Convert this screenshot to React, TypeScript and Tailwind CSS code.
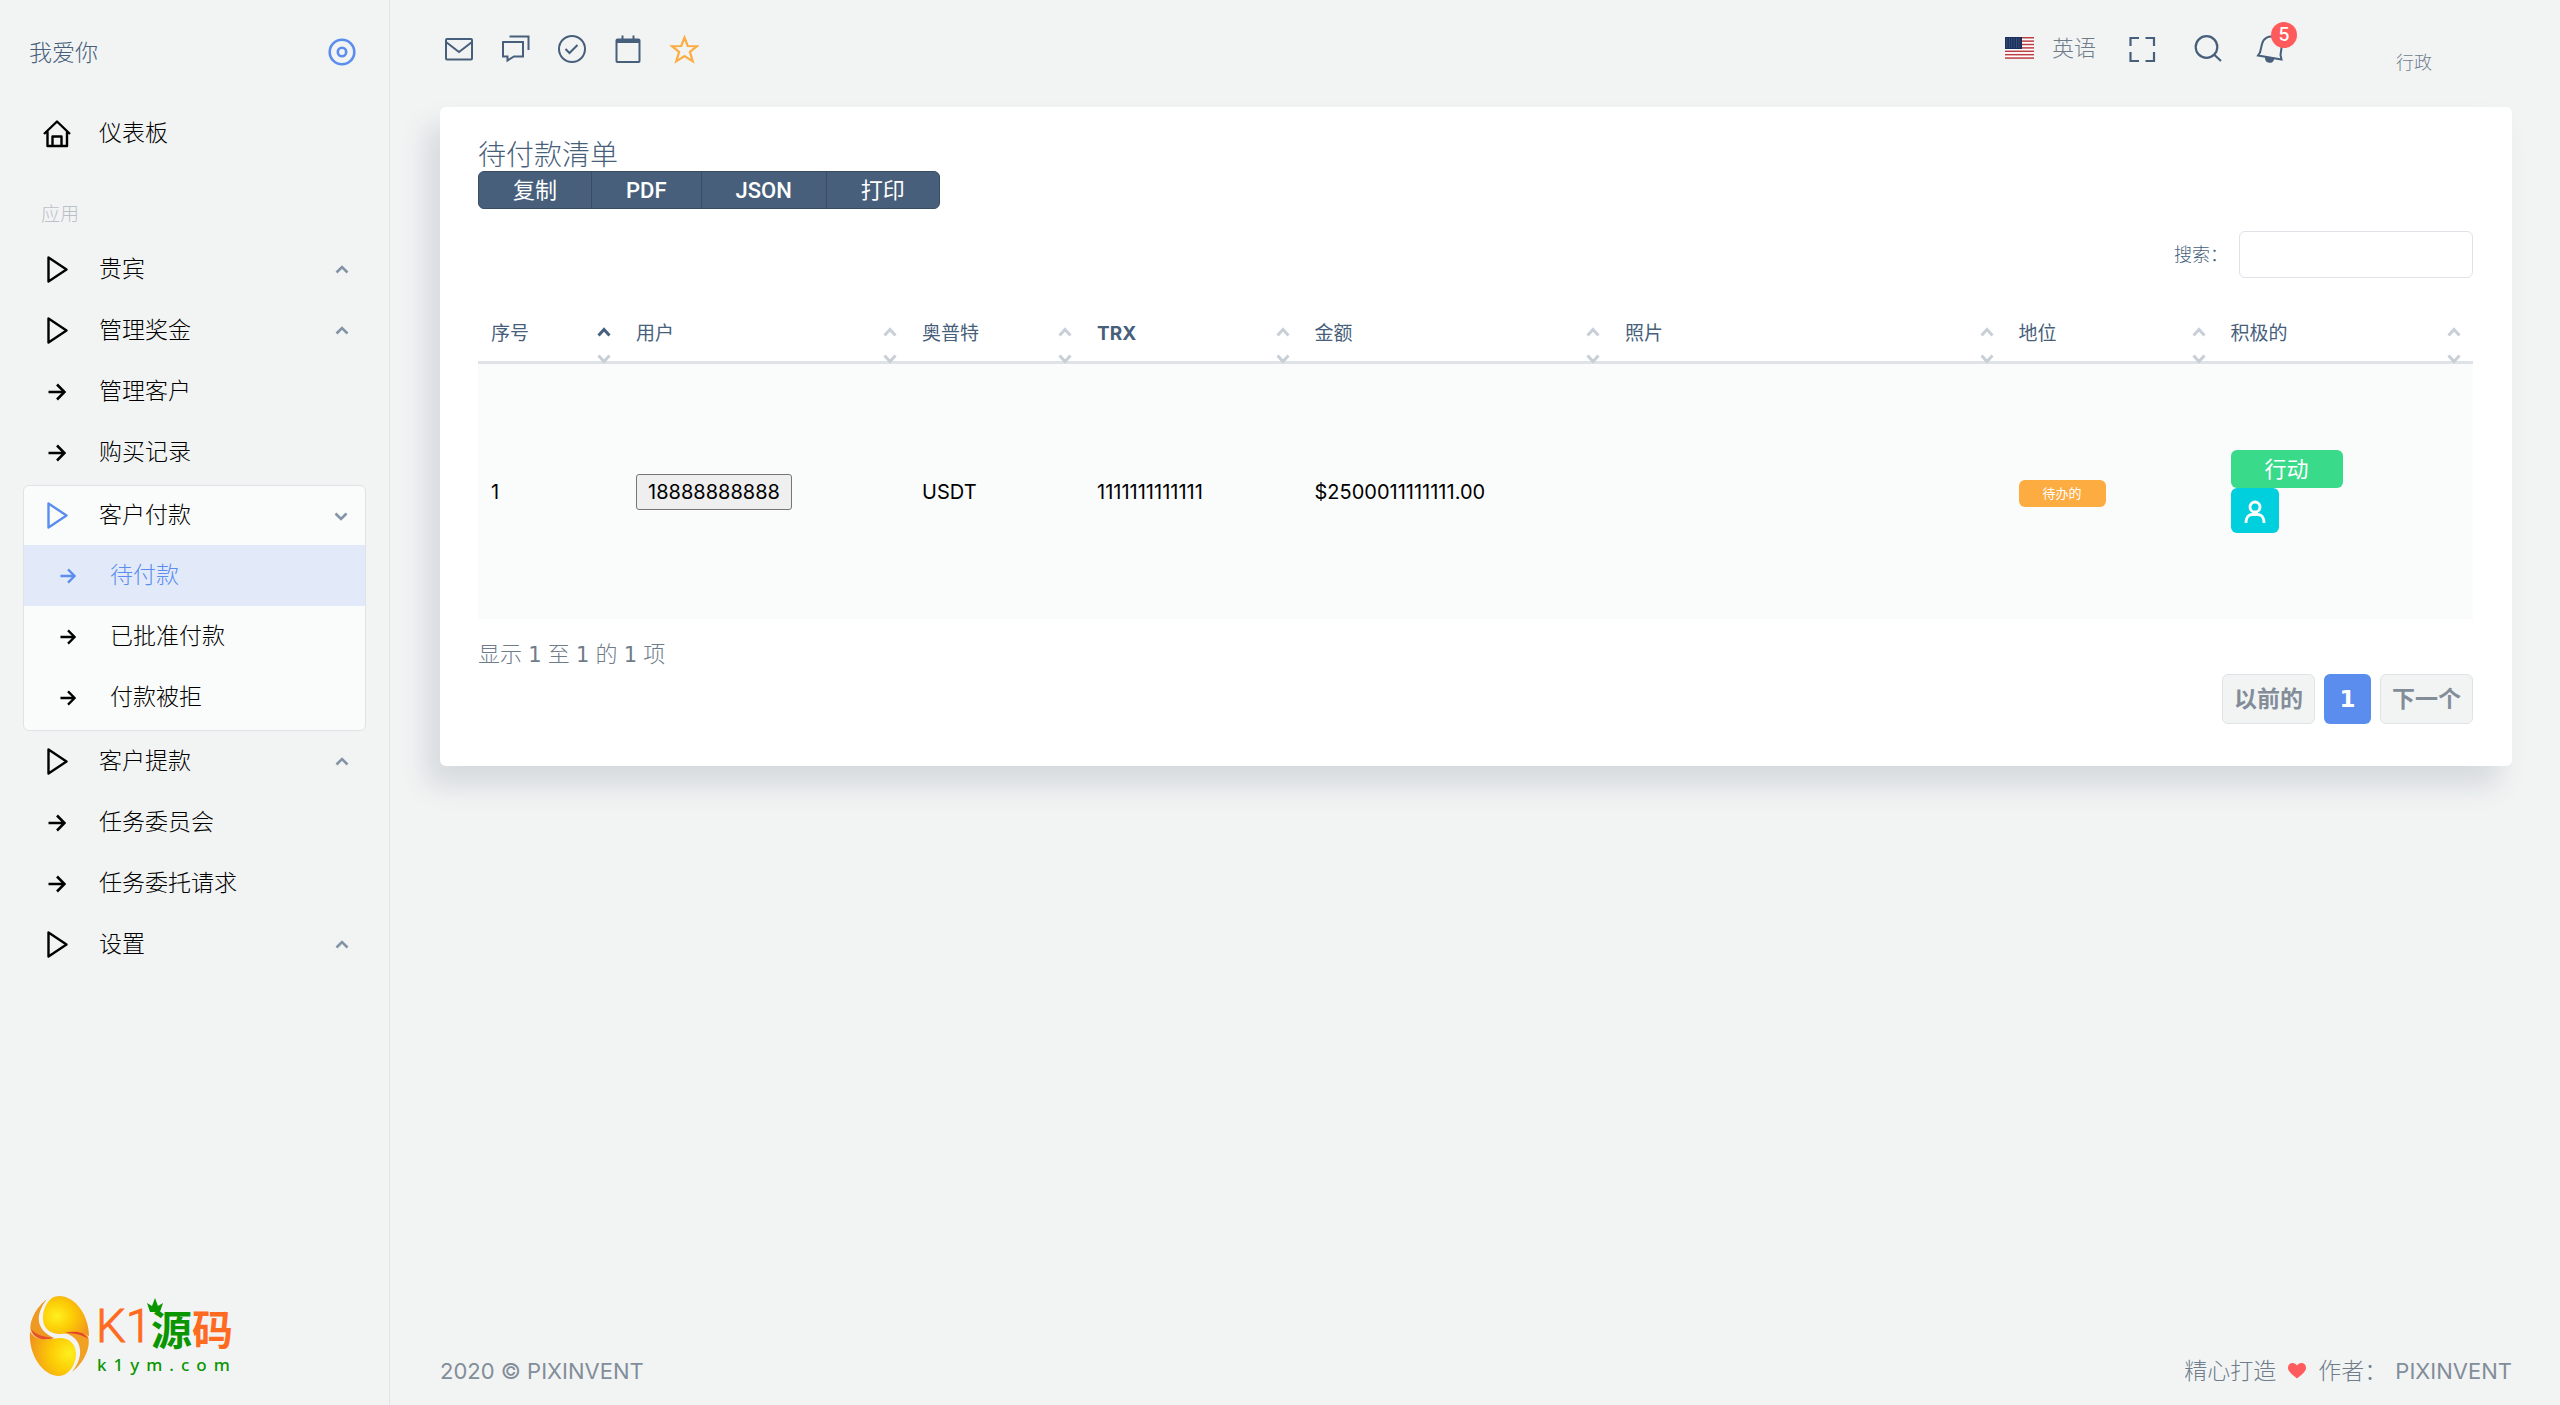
import { clsx } from 'clsx';

const MENU_TOP = [
  { label: '贵宾', icon: 'play', arrow: true },
  { label: '管理奖金', icon: 'play', arrow: true },
  { label: '管理客户', icon: 'arrow', arrow: false },
  { label: '购买记录', icon: 'arrow', arrow: false },
];

const SUB_MENU = [
  { label: '待付款', active: true },
  { label: '已批准付款', active: false },
  { label: '付款被拒', active: false },
];

const MENU_BOTTOM = [
  { label: '客户提款', icon: 'play', arrow: true },
  { label: '任务委员会', icon: 'arrow', arrow: false },
  { label: '任务委托请求', icon: 'arrow', arrow: false },
  { label: '设置', icon: 'play', arrow: true },
];

const COLUMNS = [
  { label: '序号', width: 'w-[7.27%]' },
  { label: '用户', width: 'w-[14.34%]' },
  { label: '奥普特', width: 'w-[8.77%]' },
  { label: 'TRX', width: 'w-[10.9%]' },
  { label: '金额', width: 'w-[15.56%]' },
  { label: '照片', width: 'w-[19.73%]' },
  { label: '地位', width: 'w-[10.63%]' },
  { label: '积极的', width: 'w-[12.8%]' },
];

function PlayIcon() {
  return (
    <svg width="28" height="28" viewBox="0 0 28 28" fill="none" stroke="currentColor" strokeWidth="2.4" strokeLinejoin="round">
      <path d="M5.5 1.5 L23.5 13.5 L5.5 25.5 Z" />
    </svg>
  );
}

function ArrowIcon({ size }: { size: number }) {
  return (
    <svg width={size} height={size} viewBox="0 0 18 18" fill="none" stroke="currentColor" strokeWidth="2.6">
      <path d="M0.5 9 H16 M9 1.5 L16.5 9 L9 16.5" />
    </svg>
  );
}

function Chevron({ down }: { down?: boolean }) {
  return (
    <svg width="14" height="10" viewBox="0 0 14 10" fill="none" stroke="#8494a7" strokeWidth="2.6">
      <path d={down ? 'M1.5 2.5 L7 8 L12.5 2.5' : 'M1.5 7.5 L7 2 L12.5 7.5'} />
    </svg>
  );
}

function MenuItem({ label, icon, arrow }: { label: string; icon: string; arrow: boolean }) {
  return (
    <a href="#" className="h-[61px] pl-[18px] pr-[17px] flex items-center text-black">
      <span className="w-[32px] flex justify-center">
        {icon === 'play' ? <PlayIcon /> : <ArrowIcon size={18} />}
      </span>
      <span className="flex-1 pl-[26px]">{label}</span>
      {arrow && <Chevron />}
    </a>
  );
}

function Logo() {
  return (
    <svg width="216" height="84" viewBox="0 0 216 84" className="overflow-visible">
      <defs>
        <radialGradient id="top" cx="0.3" cy="0.5" r="0.8">
          <stop offset="0" stopColor="#fff01e" />
          <stop offset="0.45" stopColor="#fccb05" />
          <stop offset="1" stopColor="#f0921e" />
        </radialGradient>
        <radialGradient id="bottom" cx="0.85" cy="0.5" r="0.9">
          <stop offset="0" stopColor="#fff01e" />
          <stop offset="0.45" stopColor="#fccb05" />
          <stop offset="1" stopColor="#f0921e" />
        </radialGradient>
      </defs>
      <path d="M30 1 C46 1 60 20 60 41 C52 36 42 39 29 39 C18 38 13 30 14 21 C15 12 20 1 30 1 Z" fill="url(#top)" />
      <path d="M1 36 C6 47 20 44 32 43 C42 43 48 52 47 61 C46 71 39 81 30 81 C14 81 -1 60 1 36 Z" fill="url(#bottom)" />
      <path d="M18 4 C3 16 0 31 2 36 C5 44 14 45 25 43 C9 36 4 22 18 4 Z" fill="#ee9a22" />
      <path d="M2 34 C5 44 14 46 25 43 C15 42 7 40 2 34 Z" fill="#e6502c" />
      <path d="M43 77 C57 66 62 50 59 41 C56 37 46 36 36 38 C52 42 57 60 43 77 Z" fill="#f0a022" />
      <path d="M59 44 C56 37 46 35 36 38 C46 38 54 40 59 44 Z" fill="#e6402c" />
      <text x="67" y="47" fontSize="47" fontFamily="Roboto, sans-serif" fontWeight="300" stroke="#ff6a21" strokeWidth="1" fill="#ff6a21">K1</text>
      <path d="M121 17 L118 8 L123 11 L126 3 L129 11 L134 8 L131 17 Z" fill="#0a9600" />
      <text x="122" y="50" fontSize="41" fontWeight="700" fontFamily="'Noto Sans CJK SC', sans-serif" fill="#0a9600">源</text>
      <text x="163" y="50" fontSize="41" fontWeight="700" fontFamily="'Noto Sans CJK SC', sans-serif" fill="#ff6a21">码</text>
      <text x="68" y="76" fontSize="17" letterSpacing="7" fontFamily="'Noto Sans', sans-serif" fontWeight="500" fill="#0a9600">k1ym.com</text>
    </svg>
  );
}

function Flag() {
  return (
    <svg width="29" height="22" viewBox="0 0 29 22" className="shrink-0">
      <rect width="29" height="22" fill="#fff" />
      {[0, 2, 4, 6, 8, 10, 12].map(i => (
        <rect key={i} y={(i * 22) / 13} width="29" height="1.5" fill="#bd3d44" />
      ))}
      <rect width="17" height="12" fill="#192f5d" />
      {[1.5, 3.5, 5.5, 7.5, 9.5].map(y => (
        <path key={y} d={`M1.5 ${y + 0.5} H16`} stroke="#8c97ae" strokeWidth="0.8" strokeDasharray="0.8 1.6" />
      ))}
    </svg>
  );
}

function Sidebar() {
  return (
    <aside className="w-[390px] shrink-0 border-r border-[#dfe3e7] flex flex-col text-[23px] font-light">
      <div className="h-[103px] pt-[36px] pl-[29px] pr-[33px] flex items-start justify-between">
        <span className="text-[#475f7b] leading-[35px]">我爱你</span>
        <button aria-label="切换菜单" className="text-[#5a8dee] pt-[2px]">
          <svg width="28" height="28" viewBox="0 0 28 28" fill="none" stroke="currentColor" strokeWidth="2.6">
            <circle cx="14" cy="14" r="12.3" />
            <circle cx="14" cy="14" r="4.2" />
          </svg>
        </button>
      </div>
      <nav className="px-[23px]">
        <a href="#" className="h-[61px] pl-[18px] flex items-center text-black">
          <span className="w-[32px] flex justify-center">
            <svg width="28" height="28" viewBox="0 0 28 28" fill="none" stroke="currentColor" strokeWidth="2.4" strokeLinejoin="round">
              <path d="M1 14 L14 1.5 L27 14 M4.5 11.5 V26 H24 V11.5 M9.5 26 V16.5 H18.5 V26" />
            </svg>
          </span>
          <span className="pl-[26px]">仪表板</span>
        </a>
        <div className="h-[75px] pl-[18px] pt-[38px] text-[19px] leading-[26px] text-[#bac0c7]">应用</div>
        {MENU_TOP.map(item => <MenuItem key={item.label} {...item} />)}
        <div className="mt-[2px] pb-[2px] border border-[#dfe3e7] rounded-md bg-[#fafbfb] overflow-hidden">
          <a href="#" className="h-[59px] pl-[17px] pr-[17px] flex items-center text-black">
            <span className="w-[32px] flex justify-center text-[#5a8dee]"><PlayIcon /></span>
            <span className="flex-1 pl-[26px]">客户付款</span>
            <Chevron down />
          </a>
          {SUB_MENU.map(item => (
            <a
              key={item.label}
              href="#"
              className={clsx(
                'h-[61px] pl-[36px] flex items-center',
                item.active ? 'bg-[#e2eafa] text-[#5a8dee]' : 'text-black',
              )}
            >
              <ArrowIcon size={16} />
              <span className="pl-[34px]">{item.label}</span>
            </a>
          ))}
        </div>
        {MENU_BOTTOM.map(item => <MenuItem key={item.label} {...item} />)}
      </nav>
      <div className="mt-auto pl-[29px] pb-[26px]"><Logo /></div>
    </aside>
  );
}

function Header() {
  return (
    <header className="h-[107px] pl-[5px] flex items-start text-[#475f7b]">
      <div className="pt-[34px] flex gap-[26px]">
        <button aria-label="邮件">
          <svg width="30" height="30" viewBox="0 0 30 30" fill="none" stroke="currentColor" strokeWidth="2">
            <rect x="1" y="5" width="26" height="20.5" rx="1" />
            <path d="M1 8 L14 18 L27 8" />
          </svg>
        </button>
        <button aria-label="聊天">
          <svg width="30" height="30" viewBox="0 0 30 30" fill="none" stroke="currentColor" strokeWidth="2">
            <path d="M8.5 2.5 H27.5 V16" />
            <path d="M2 8 H22 V22.5 H13 L6.5 26.5 V22.5 H2 Z" />
          </svg>
        </button>
        <button aria-label="待办">
          <svg width="30" height="30" viewBox="0 0 30 30" fill="none" stroke="currentColor" strokeWidth="2">
            <circle cx="15" cy="15" r="13" />
            <path d="M8.5 15 L12.5 19 L20.5 11" />
          </svg>
        </button>
        <button aria-label="日历">
          <svg width="30" height="30" viewBox="0 0 30 30" fill="none" stroke="currentColor" strokeWidth="2">
            <rect x="3.5" y="5.5" width="23" height="22.5" rx="1" />
            <path d="M3.5 7 H26.5" strokeWidth="4" />
            <path d="M9.5 1.5 V5 M20.5 1.5 V5" />
          </svg>
        </button>
        <button aria-label="收藏" className="text-[#fdac41]">
          <svg width="30" height="30" viewBox="0 0 30 30" fill="none" stroke="currentColor" strokeWidth="2.2">
            <path d="M15.5 3.5 L18.7 12 L28 12.2 L20.9 17.8 L23.7 27.3 L15.5 22 L7.3 27.3 L10.1 17.8 L3 12.2 L12.3 12 Z" />
          </svg>
        </button>
      </div>
      <div className="ml-auto flex items-start">
        <a href="#" className="pt-[32px] flex items-center gap-[18px] text-[22px] leading-[32px] font-light text-[#6f7c8a]">
          <Flag />英语
        </a>
        <button aria-label="全屏" className="pt-[34px] ml-[31px]">
          <svg width="30" height="30" viewBox="0 0 30 30" fill="none" stroke="currentColor" strokeWidth="2.2">
            <path d="M3.5 12 V4 H12 M18.5 4 H27 V12 M27 18 V27 H18.5 M12 27 H3.5 V18" />
          </svg>
        </button>
        <button aria-label="搜索" className="pt-[34px] ml-[36px]">
          <svg width="30" height="30" viewBox="0 0 30 30" fill="none" stroke="currentColor" strokeWidth="2.2">
            <circle cx="13.5" cy="13" r="10.8" />
            <path d="M21 20.5 L28 27" />
          </svg>
        </button>
        <button aria-label="通知" className="relative pt-[34px] ml-[33px]">
          <svg width="30" height="30" viewBox="0 0 30 30" fill="none" stroke="currentColor" strokeWidth="2">
            <path d="M2 21.5 L4 18.5 L6 10 C7.5 4 13 1.5 18 3 C24 5 26 9 25.5 14 L24.5 21 L25.5 25.5 Z" />
            <path d="M10 24.5 C10.5 28.5 15.5 29 17 25.5 Z" fill="currentColor" />
          </svg>
          <span className="absolute top-[22px] left-[15px] w-[26px] h-[26px] rounded-full bg-[#ff5b5c] text-white text-[18px] leading-[26px] font-medium">5</span>
        </button>
        <a href="#" className="ml-[110px] mr-[80px] pt-[50px] text-[18px] leading-[26px] font-light text-[#6f7c8a]">行政</a>
      </div>
    </header>
  );
}

function SortArrows({ active }: { active: boolean }) {
  return (
    <span className="absolute right-[12px] top-[22px] flex flex-col gap-[17px]">
      <svg width="14" height="10" viewBox="0 0 14 10" fill="none" strokeWidth="3" stroke={active ? '#475f7b' : '#c8cfd7'}>
        <path d="M1.5 8.5 L7 2.5 L12.5 8.5" />
      </svg>
      <svg width="14" height="10" viewBox="0 0 14 10" fill="none" strokeWidth="3" stroke="#c8cfd7">
        <path d="M1.5 1.5 L7 7.5 L12.5 1.5" />
      </svg>
    </span>
  );
}

function PaymentsTable() {
  return (
    <table className="mt-[27px] w-full table-fixed border-separate border-spacing-0 text-left">
      <thead>
        <tr>
          {COLUMNS.map((col, i) => (
            <th
              key={col.label}
              className={clsx('relative h-[59px] px-[13px] pt-[2px] border-b-3 border-[#dfe3e7] text-[19px] text-[#475f7b]', col.width, col.label === 'TRX' ? 'font-bold' : 'font-normal')}
            >
              {col.label}
              <SortArrows active={i === 0} />
            </th>
          ))}
        </tr>
      </thead>
      <tbody>
        <tr className="h-[255px] bg-[#fafbfb] text-[20px] text-black [&>td]:px-[13px]">
          <td>1</td>
          <td>
            <button className="h-[36px] px-[11px] rounded-[3px] border border-[#767676] bg-[#efefef]">18888888888</button>
          </td>
          <td>USDT</td>
          <td>1111111111111</td>
          <td>$2500011111111.00</td>
          <td></td>
          <td>
            <span className="inline-block h-[27px] px-[24px] rounded-md bg-[#fdac41] text-[13px] leading-[27px] text-white">待办的</span>
          </td>
          <td>
            <div className="flex flex-col items-start">
              <button className="h-[38px] px-[34px] rounded-md bg-[#39da8a] text-[22px] leading-[38px] text-white">行动</button>
              <button aria-label="用户" className="w-[48px] h-[45px] rounded-md bg-[#00cfdd] text-white flex items-center justify-center">
                <svg width="24" height="24" viewBox="0 0 24 24" fill="none" stroke="currentColor" strokeWidth="2.8">
                  <circle cx="12" cy="8" r="5" />
                  <path d="M3 24 C3 18 6 15.5 9 15.5 H15 C18 15.5 21 18 21 24" />
                </svg>
              </button>
            </div>
          </td>
        </tr>
      </tbody>
    </table>
  );
}

function PageDigit() {
  return <span className="font-['DejaVu_Sans',sans-serif] text-[21px] font-normal">1</span>;
}

export default function App() {
  return (
    <div className="min-h-screen bg-[#f2f4f4] flex font-[Inter,'Noto_Sans_CJK_SC',sans-serif]">
      <Sidebar />
      <div className="flex-1 min-w-0 pl-[50px] pr-[48px] flex flex-col">
        <Header />
        <section className="pl-[38px] pr-[39px] pt-[32px] pb-[42px] bg-white rounded-md shadow-[-13px_19px_29px_0_rgba(25,42,70,0.13)]">
          <h4 className="text-[28px] leading-[32px] font-light text-[#475f7b]">待付款清单</h4>
          <div className="w-fit flex h-[38px] rounded-md border border-[#394c62] divide-x divide-[#394c62] overflow-hidden bg-[#475f7b] text-[22px] text-white font-[Roboto,'Noto_Sans_CJK_SC',sans-serif]">
            <button className="px-[34px]">复制</button>
            <button className="px-[34px] font-medium">PDF</button>
            <button className="px-[34px] font-medium">JSON</button>
            <button className="px-[34px]">打印</button>
          </div>
          <div className="mt-[22px] flex items-center justify-end">
            <label htmlFor="search" className="pr-[11px] text-[18px] font-light text-[#475f7b]">搜索：</label>
            <input id="search" type="search" className="w-[234px] h-[47px] px-3 rounded-md border border-[#dfe3e7] bg-white text-[20px]" />
          </div>
          <PaymentsTable />
          <p className="pt-[19px] text-[22px] leading-[32px] font-light text-[#6f7c8a]">
            显示 <PageDigit /> 至 <PageDigit /> 的 <PageDigit /> 项
          </p>
          <div className="mt-[3px] flex items-center justify-end gap-[9px] text-[23px] font-bold">
            <button className="h-[50px] px-[11px] rounded-md border border-[#dfe3e7] bg-[#f2f4f4] text-[#828d99]">以前的</button>
            <button className="h-[50px] w-[47px] rounded-md bg-[#5a8dee] text-white font-['DejaVu_Sans',sans-serif]">1</button>
            <button className="h-[50px] px-[11px] rounded-md border border-[#dfe3e7] bg-[#f2f4f4] text-[#828d99]">下一个</button>
          </div>
        </section>
        <footer className="mt-auto pb-[18px] flex items-center justify-between text-[22px] leading-[32px] text-[#828d99]">
          <span>2020 © PIXINVENT</span>
          <span className="flex items-center">
            <span className="text-[23px] font-light text-[#6f7c8a]">精心打造</span>
            <svg width="18" height="16" viewBox="0 0 18 16" className="mx-[12px]" fill="#ff5b5c">
              <path d="M9 15.5 C3 11 0 8 0 4.8 C0 2 2 0 4.6 0 C6.5 0 8 1 9 2.6 C10 1 11.5 0 13.4 0 C16 0 18 2 18 4.8 C18 8 15 11 9 15.5 Z" />
            </svg>
            <span className="text-[23px] font-light text-[#6f7c8a]">作者：</span>
            <a href="#" className="ml-[8px]">PIXINVENT</a>
          </span>
        </footer>
      </div>
    </div>
  );
}
